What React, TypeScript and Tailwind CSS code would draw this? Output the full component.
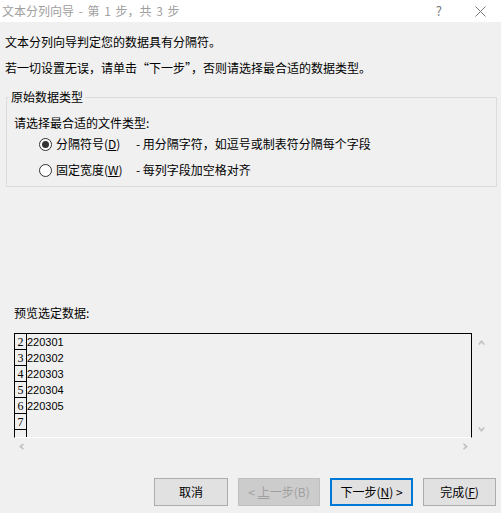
import React from 'react';

const rows = [
  { n: '2', v: '220301' },
  { n: '3', v: '220302' },
  { n: '4', v: '220303' },
  { n: '5', v: '220304' },
  { n: '6', v: '220305' },
  { n: '7', v: '' },
  { n: '', v: '' },
];

const Chevron = ({ dir }: { dir: 'up' | 'down' | 'left' | 'right' }) => {
  const vertical = dir === 'up' || dir === 'down';
  const points = {
    up: '0.8,4.5 3.5,1.3 6.2,4.5',
    down: '0.8,0.5 3.5,3.7 6.2,0.5',
    left: '4.5,0.8 1.3,3.5 4.5,6.2',
    right: '0.5,0.8 3.7,3.5 0.5,6.2',
  }[dir];
  return (
    <svg
      width={vertical ? 7 : 5}
      height={vertical ? 5 : 7}
      viewBox={vertical ? '0 0 7 5' : '0 0 5 7'}
      className="block"
    >
      <polyline points={points} fill="none" stroke="#c2c2c2" strokeWidth="1.7" />
    </svg>
  );
};

const Radio = ({ checked }: { checked?: boolean }) => (
  <span className="w-[13px] h-[13px] rounded-full border border-[#333333] bg-white flex items-center justify-center shrink-0">
    {checked && <span className="w-[7px] h-[7px] rounded-full bg-[#333333]" />}
  </span>
);

export default function App() {
  return (
    <div
      className="w-[501px] h-[513px] bg-[#f0f0f0] overflow-hidden flex flex-col text-[12px] leading-[16px] text-black"
      style={{ fontFamily: '"Noto Sans CJK SC", "Noto Sans", sans-serif' }}
    >
      {/* Title bar */}
      <div className="h-[22px] bg-white flex items-center shrink-0">
        <span className="pl-[2px] text-[#a0a0a0] [word-spacing:2px]">文本分列向导 - 第 1 步，共 3 步</span>
        <span className="ml-auto mr-[33px] text-[13px] text-[#777777]">?</span>
        <svg width="11" height="11" viewBox="0 0 11 11" className="mr-[15px]">
          <path d="M0.5 0.5 L10.5 10.5 M10.5 0.5 L0.5 10.5" stroke="#777777" strokeWidth="1" />
        </svg>
      </div>

      <p className="mt-[12px] pl-[5px]">文本分列向导判定您的数据具有分隔符。</p>
      <p className="mt-[10px] pl-[5px]">若一切设置无误，请单击“下一步”，否则请选择最合适的数据类型。</p>

      {/* Original data type group */}
      <fieldset className="mt-[13px] ml-[6px] w-[491px] border border-[#dcdcdc] px-[7px] pb-[8px]">
        <legend className="ml-[-5px] px-[2px] leading-[16px]">原始数据类型</legend>
        <p className="mt-[10px]">请选择最合适的文件类型:</p>
        <div className="mt-[5px] flex items-center pl-[25px] h-[16px]">
          <Radio checked />
          <span className="ml-[4px] w-[80px]">
            分隔符号(<span className="underline">D</span>)
          </span>
          <span>- 用分隔字符，如逗号或制表符分隔每个字段</span>
        </div>
        <div className="mt-[10px] flex items-center pl-[25px] h-[16px]">
          <Radio />
          <span className="ml-[4px] w-[80px]">
            固定宽度(<span className="underline">W</span>)
          </span>
          <span>- 每列字段加空格对齐</span>
        </div>
      </fieldset>

      {/* Preview */}
      <p className="mt-[118px] pl-[14px]">预览选定数据:</p>
      <div className="mt-[12px] ml-[14px] grid grid-cols-[458px_19px] grid-rows-[105px_16px]">
        <div className="border-t border-l border-r border-black border-b border-b-white overflow-hidden">
          {rows.map((r, i) => (
            <div key={i} className="h-[16px] flex shrink-0">
              <div
                className="w-[12px] h-[16px] border-r border-b border-black flex items-end justify-center text-[12px] leading-[12px] pb-[1px]"
                style={{ fontFamily: '"Liberation Serif", serif' }}
              >
                {r.n}
              </div>
              <div
                className="flex items-center text-[11px]"
                style={{ fontFamily: '"Liberation Sans", Arial, sans-serif' }}
              >
                {r.v}
              </div>
            </div>
          ))}
        </div>
        <div className="flex flex-col items-center justify-between pt-[7px] pb-[6px]">
          <Chevron dir="up" />
          <Chevron dir="down" />
        </div>
        <div className="flex items-center justify-between pl-[5px] pr-[4px]">
          <Chevron dir="left" />
          <Chevron dir="right" />
        </div>
        <div />
      </div>

      {/* Buttons */}
      <div className="mt-[24px] flex justify-end gap-[10px] pr-[5px]">
        <button className="w-[74px] h-[28px] bg-[#e1e1e1] border border-[#adadad] text-black">取消</button>
        <button className="w-[82px] h-[28px] bg-[#cccccc] border border-[#bfbfbf] text-[#a0a0a0]">
          &lt; <span className="underline">上</span>一步(B)
        </button>
        <button className="w-[83px] h-[28px] bg-[#e1e1e1] border-2 border-[#0078d7] text-black">
          下一步(<span className="underline">N</span>) &gt;
        </button>
        <button className="w-[73px] h-[28px] bg-[#e1e1e1] border border-[#adadad] text-black">
          完成(<span className="underline">F</span>)
        </button>
      </div>
    </div>
  );
}
